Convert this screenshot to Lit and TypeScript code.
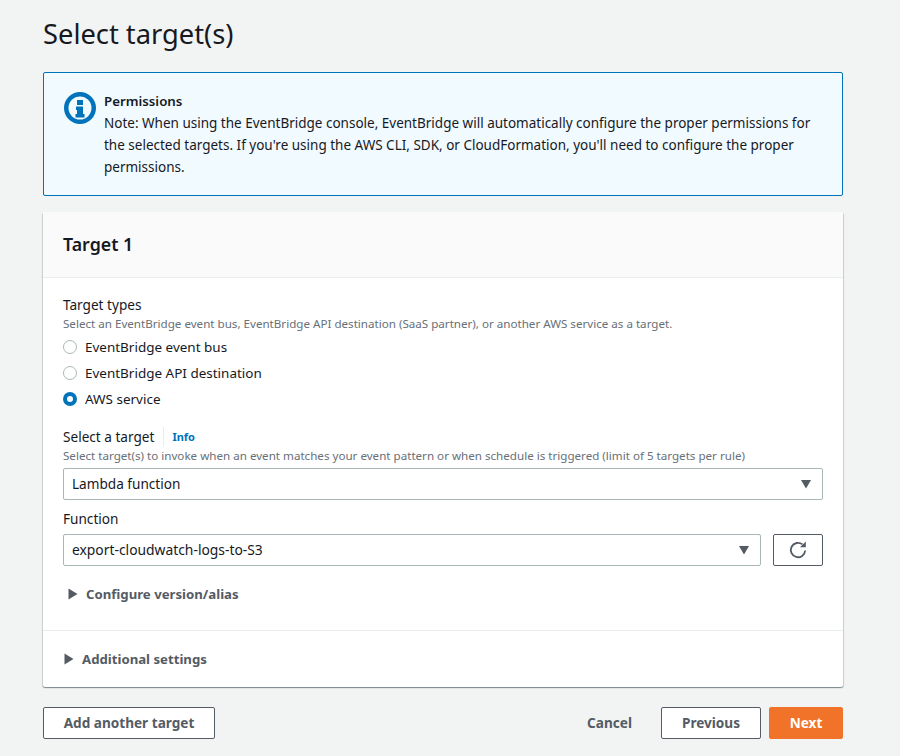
import { LitElement, html, css } from "lit";
import { customElement } from "lit/decorators.js";

const caret = html`<svg class="caret" width="12" height="12" viewBox="0 0 12 12"><path d="M1 2h10L6 10.5z" fill="#545b64"/></svg>`;
const arrow = html`<svg class="arrow" width="10" height="12" viewBox="0 0 10 12"><path d="M0.5 0.5v11L9.5 6z" fill="#545b64"/></svg>`;

@customElement("app-root")
export class AppRoot extends LitElement {
  static styles = css`
    :host {
      display: block;
      height: 756px;
      overflow: hidden;
      background: #f2f3f3;
      font-family: "Noto Sans", sans-serif;
      font-size: 13.5px;
      line-height: 22px;
      color: #16191f;
    }
    .page {
      padding: 0 57px 0 43px;
    }
    h1 {
      margin: 0;
      padding-top: 14px;
      height: 72px;
      box-sizing: border-box;
      font-size: 27.3px;
      line-height: 40px;
      font-weight: 400;
    }
    .alert {
      box-sizing: border-box;
      height: 124px;
      display: flex;
      gap: 8px;
      padding: 17px 20px 0 20px;
      border: 1px solid #0073bb;
      border-radius: 2px;
      background: #f1faff;
    }
    .alert svg {
      flex: none;
      margin-top: 2px;
    }
    .alert b {
      display: block;
      font-size: 13.3px;
      font-weight: 600;
    }
    .alert p {
      margin: 0;
      font-size: 13.5px;
      line-height: 22px;
    }
    .card {
      margin-top: 16px;
      height: 475px;
      background: #fff;
      border-radius: 2px;
      box-shadow: 0 1px 1px 0 rgba(0, 28, 36, 0.3), 1px 1px 1px 0 rgba(0, 28, 36, 0.15), -1px 1px 1px 0 rgba(0, 28, 36, 0.15);
    }
    .card-head {
      height: 66px;
      box-sizing: border-box;
      padding: 0 20px 2px;
      display: flex;
      align-items: center;
      background: #fafafa;
      border-bottom: 1px solid #eaeded;
      font-size: 17.8px;
      font-weight: 600;
    }
    .card-body {
      height: 353px;
      box-sizing: border-box;
      padding: 17px 20px 0;
      border-bottom: 1px solid #eaeded;
    }
    .label {
      font-size: 13.6px;
      line-height: 20px;
      display: flex;
      align-items: center;
    }
    .hint {
      margin-top: 1px;
      font-size: 11.62px;
      line-height: 16px;
      color: #687078;
    }
    .radios {
      display: flex;
      flex-direction: column;
      gap: 4px;
      margin-top: 4px;
      margin-bottom: 17px;
    }
    .radio {
      display: flex;
      align-items: center;
      gap: 8px;
      height: 22px;
      font-size: 13.47px;
    }
    .dot {
      box-sizing: border-box;
      width: 14px;
      height: 14px;
      border-radius: 50%;
      border: 1px solid #aab7b8;
      background: #fff;
    }
    .dot.on {
      border: 4px solid #0073bb;
    }
    .info {
      margin-left: 9px;
      padding-left: 8px;
      border-left: 1px solid #eaeded;
      font-size: 11px;
      font-weight: 700;
      color: #0073bb;
    }
    .select {
      box-sizing: border-box;
      height: 32px;
      display: flex;
      align-items: center;
      justify-content: space-between;
      padding: 0 10px 0 8px;
      background: #fff;
      border: 1px solid #aab7b8;
      border-radius: 2px;
      font-size: 13.6px;
    }
    .first {
      margin: 4px 0 9px;
    }
    .func-row {
      display: flex;
      gap: 12px;
      margin-top: 5px;
    }
    .func-row .select {
      flex: 1;
      font-size: 13.85px;
    }
    .refresh {
      box-sizing: border-box;
      width: 50px;
      height: 32px;
      display: flex;
      align-items: center;
      justify-content: center;
      border: 1px solid #545b64;
      border-radius: 2px;
      background: #fff;
    }
    .expand {
      display: flex;
      align-items: center;
      gap: 8px;
      font-size: 13.2px;
      font-weight: 700;
      color: #545b64;
    }
    .configure {
      margin-top: 17px;
      padding-left: 5px;
    }
    .additional {
      padding: 17px 20px 0 21px;
    }
    .footer {
      margin-top: 20px;
      display: flex;
      align-items: center;
    }
    .btn {
      box-sizing: border-box;
      height: 32px;
      display: flex;
      align-items: center;
      justify-content: center;
      border: 1px solid #545b64;
      border-radius: 2px;
      background: #fff;
      font-size: 13.6px;
      font-weight: 700;
      color: #545b64;
    }
    .add {
      width: 172px;
    }
    .spacer {
      flex: 1;
    }
    .cancel {
      margin-right: 29px;
      font-size: 13.6px;
      font-weight: 700;
      color: #545b64;
    }
    .prev {
      width: 100px;
      margin-right: 8px;
    }
    .next {
      width: 74px;
      border-color: #f1732a;
      background: #f1732a;
      color: #fff;
    }
  `;

  render() {
    return html`
      <div class="page">
        <h1>Select target(s)</h1>
        <div class="alert">
          <svg width="32" height="32" viewBox="0 0 32 32">
            <circle cx="16" cy="16" r="13.75" fill="none" stroke="#0073bb" stroke-width="4.5"/>
            <path d="M13 8h6v5h-6zM12 14.5h7v7.5h1.5v3.5h-9V22H13v-4h-1z" fill="#0073bb"/>
          </svg>
          <div>
            <b>Permissions</b>
            <p>Note: When using the EventBridge console, EventBridge will automatically configure the proper permissions for the selected targets. If you're using the AWS CLI, SDK, or CloudFormation, you'll need to configure the proper permissions.</p>
          </div>
        </div>
        <div class="card">
          <div class="card-head">Target 1</div>
          <div class="card-body">
            <div class="label">Target types</div>
            <div class="hint">Select an EventBridge event bus, EventBridge API destination (SaaS partner), or another AWS service as a target.</div>
            <div class="radios">
              <div class="radio"><span class="dot"></span>EventBridge event bus</div>
              <div class="radio"><span class="dot"></span>EventBridge API destination</div>
              <div class="radio"><span class="dot on"></span>AWS service</div>
            </div>
            <div class="label">Select a target<span class="info">Info</span></div>
            <div class="hint">Select target(s) to invoke when an event matches your event pattern or when schedule is triggered (limit of 5 targets per rule)</div>
            <div class="select first">Lambda function ${caret}</div>
            <div class="label">Function</div>
            <div class="func-row">
              <div class="select">export-cloudwatch-logs-to-S3 ${caret}</div>
              <div class="refresh">
                <svg width="18" height="18" viewBox="0 0 18 18">
                  <path d="M16.2 9.5a7.2 7.2 0 1 1-2.7-6.1" fill="none" stroke="#545b64" stroke-width="1.8"/>
                  <path d="M16.8 0.5v5.8h-5.8z" fill="#545b64"/>
                </svg>
              </div>
            </div>
            <div class="expand configure">${arrow}Configure version/alias</div>
          </div>
          <div class="expand additional">${arrow}Additional settings</div>
        </div>
        <div class="footer">
          <div class="btn add">Add another target</div>
          <div class="spacer"></div>
          <div class="cancel">Cancel</div>
          <div class="btn prev">Previous</div>
          <div class="btn next">Next</div>
        </div>
      </div>
    `;
  }
}
